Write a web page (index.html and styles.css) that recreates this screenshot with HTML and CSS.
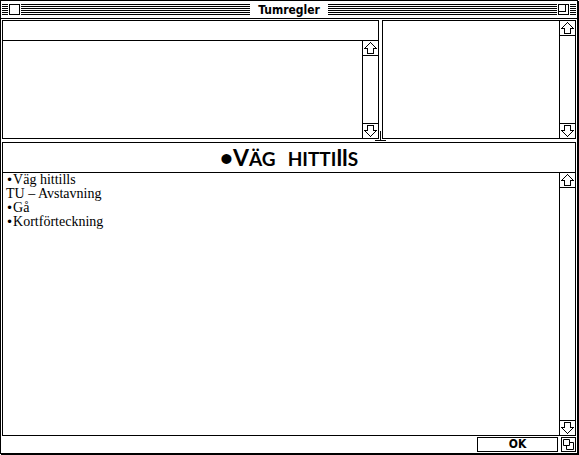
FILE: index.html
```html
<!DOCTYPE html>
<html lang="sv">
<head>
  <meta charset="UTF-8" />
  <meta name="viewport" content="width=device-width, initial-scale=1.0"/>
  <title>Tumregler</title>
  <link rel="stylesheet" href="styles.css">
</head>
<body>
  <!-- Arrow shapes shared by the scroll bars -->
  <svg class="symbols" aria-hidden="true">
    <symbol id="arrow-up" viewBox="0 0 13 12">
      <path d="M6 0h1v1h-1zM5 1h1v1h-1zM7 1h1v1h-1zM4 2h1v1h-1zM8 2h1v1h-1zM3 3h1v1h-1zM9 3h1v1h-1zM2 4h1v1h-1zM10 4h1v1h-1zM1 5h1v1h-1zM11 5h1v1h-1zM0 6h4v1h-4zM9 6h4v1h-4zM3 7h1v4h-1zM9 7h1v4h-1zM3 11h7v1h-7zM3 10h1v1h-1zM9 10h1v1h-1z"/>
    </symbol>
    <symbol id="arrow-down" viewBox="0 0 13 12">
      <path d="M3 0h7v1h-7zM3 1h1v5h-1zM9 1h1v5h-1zM0 5h4v1h-4zM9 5h4v1h-4zM1 6h1v1h-1zM11 6h1v1h-1zM2 7h1v1h-1zM10 7h1v1h-1zM3 8h1v1h-1zM9 8h1v1h-1zM4 9h1v1h-1zM8 9h1v1h-1zM5 10h1v1h-1zM7 10h1v1h-1zM6 11h1v1h-1z"/>
    </symbol>
  </svg>

  <main class="window">
    <header class="title-bar">
      <span class="stripes stripes-edge"></span>
      <button class="close-box" aria-label="Stäng"></button>
      <span class="stripes"></span>
      <h1 class="title">Tumregler</h1>
      <span class="stripes"></span>
      <button class="zoom-box" aria-label="Zooma"></button>
      <span class="stripes stripes-edge"></span>
    </header>

    <div class="content">
      <div class="top-row">
        <section class="panel panel-left">
          <div class="panel-header"></div>
          <div class="panel-body">
            <div class="panel-text"></div>
            <div class="scroll-bar">
              <button class="scroll-up" aria-label="Upp"><svg class="arrow"><use href="#arrow-up"/></svg></button>
              <button class="scroll-down" aria-label="Ned"><svg class="arrow"><use href="#arrow-down"/></svg></button>
            </div>
          </div>
        </section>

        <div class="splitter"></div>

        <section class="panel panel-right">
          <div class="panel-body">
            <div class="panel-text"></div>
            <div class="scroll-bar">
              <button class="scroll-up" aria-label="Upp"><svg class="arrow"><use href="#arrow-up"/></svg></button>
              <button class="scroll-down" aria-label="Ned"><svg class="arrow"><use href="#arrow-down"/></svg></button>
            </div>
          </div>
        </section>
      </div>

      <section class="panel panel-main">
        <h2 class="heading"><span>•V<span class="small">äg</span></span> <span><span class="small">hitti</span>ll<span class="small">s</span></span></h2>
        <div class="panel-body">
          <ul class="card-list">
            <li><span class="bullet">•</span>Väg hittills</li>
            <li>TU – Avstavning</li>
            <li><span class="bullet">•</span>Gå</li>
            <li><span class="bullet">•</span>Kortförteckning</li>
          </ul>
          <div class="scroll-bar">
            <button class="scroll-up" aria-label="Upp"><svg class="arrow"><use href="#arrow-up"/></svg></button>
            <button class="scroll-down" aria-label="Ned"><svg class="arrow"><use href="#arrow-down"/></svg></button>
          </div>
        </div>
      </section>

      <footer class="footer">
        <button class="ok-btn">OK</button>
        <button class="grow-box" aria-label="Ändra storlek">
          <svg class="grow-icon" viewBox="0 0 13 13">
            <path d="M4.500 4.500h7v7h-7z"/>
            <path d="M1.500 1.500h6v6h-6z"/>
          </svg>
        </button>
      </footer>
    </div>
  </main>
</body>
</html>
```

FILE: styles.css
```css
* {
  box-sizing: border-box;
}

body {
  height: 100vh;
  margin: 0;
  padding: 0 1px 1px 0;
  background-color: white;
  color: black;
  font-family: "DejaVu Sans", sans-serif;
}

button {
  margin: 0;
  padding: 0;
  border: 1px solid black;
  background-color: white;
  color: black;
}

.symbols {
  display: none;
}

.window {
  display: flex;
  flex-direction: column;
  height: 100%;
  border: 1px solid black;
  box-shadow: 1px 1px 0 black;
}

/* Title bar */
.title-bar {
  display: flex;
  align-items: center;
  gap: 1px;
  height: 18px;
  padding: 0 1px;
  border-bottom: 1px solid black;
}

.stripes {
  flex: 1;
  height: 11px;
  background: repeating-linear-gradient(black 0 1px, white 1px 2px);
}

.stripes-edge {
  flex: 0 0 6px;
}

.close-box,
.zoom-box {
  width: 11px;
  height: 11px;
}

.zoom-box::before {
  content: "";
  display: block;
  width: 6px;
  height: 6px;
  margin-bottom: 3px;
  border-right: 1px solid black;
  border-bottom: 1px solid black;
}

.title {
  margin: 0;
  padding: 0 7px;
  font-family: "DejaVu Sans Condensed", "DejaVu Sans", sans-serif;
  font-size: 12px;
  font-weight: bold;
  line-height: 16px;
}

/* Panels */
.content {
  flex: 1;
  display: flex;
  flex-direction: column;
  min-height: 0;
  padding: 1px;
}

.top-row {
  display: flex;
  height: 119px;
}

.panel {
  display: flex;
  flex-direction: column;
  border: 1px solid black;
}

.panel-left {
  flex: 375;
}

.panel-right {
  flex: 192;
}

.panel-main {
  flex: 1;
  min-height: 0;
  margin-top: 3px;
}

.panel-header {
  height: 20px;
  border-bottom: 1px solid black;
}

.panel-body {
  flex: 1;
  display: flex;
  min-height: 0;
}

.panel-text {
  flex: 1;
}

/* The handle hangs over the gap between the panels */
.splitter {
  position: relative;
  width: 3px;
  cursor: move;
}

.splitter::before,
.splitter::after {
  content: "";
  position: absolute;
  background-color: black;
}

.splitter::before {
  left: 1px;
  bottom: -2px;
  width: 1px;
  height: 10px;
}

.splitter::after {
  left: -4px;
  bottom: -2px;
  width: 11px;
  height: 1px;
}

/* Scroll bars */
.scroll-bar {
  display: flex;
  flex-direction: column;
  justify-content: space-between;
  width: 16px;
  border-left: 1px solid black;
}

.scroll-up,
.scroll-down {
  display: flex;
  justify-content: center;
  align-items: center;
  width: 100%;
  height: 15px;
  border-width: 0 0 1px;
}

.scroll-down {
  border-width: 1px 0 0;
}

.arrow {
  width: 13px;
  height: 12px;
  shape-rendering: crispEdges;
}

/* Main panel */
.heading {
  display: flex;
  justify-content: center;
  gap: 12px;
  height: 30px;
  margin: 0;
  border-bottom: 1px solid black;
  font-family: Lato, sans-serif;
  font-size: 23px;
  font-weight: bold;
  line-height: 29px;
}

.small {
  font-size: 19px;
  text-transform: uppercase;
}

.card-list {
  flex: 1;
  margin: 0;
  padding: 0 3px;
  list-style: none;
  font-family: "Liberation Serif", serif;
  font-size: 14px;
  line-height: 14px;
}

.bullet {
  font-family: "DejaVu Sans", sans-serif;
  font-size: 12px;
  line-height: 1;
}

/* Footer */
.footer {
  display: flex;
  justify-content: flex-end;
  gap: 3px;
  height: 16px;
  padding-top: 1px;
}

.ok-btn {
  width: 81px;
  height: 15px;
  font-family: "DejaVu Sans Condensed", "DejaVu Sans", sans-serif;
  font-size: 12px;
  font-weight: bold;
  line-height: 13px;
}

.grow-box {
  width: 15px;
  height: 15px;
}

.grow-icon {
  display: block;
  width: 13px;
  height: 13px;
  fill: white;
  stroke: black;
}
```
